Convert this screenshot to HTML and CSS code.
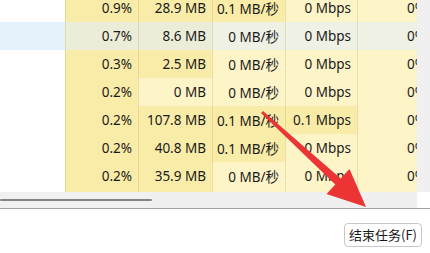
FILE: index.html
```html
<!DOCTYPE html>
<html lang="zh-CN">
<head>
    <meta charset="UTF-8">
    <title>任务管理器</title>
    <link rel="stylesheet" href="styles.css">
</head>
<body>
    <div class="window">
        <div class="grid-area">
            <div class="table-view">
                <div class="rows">
                    <div class="row">
                        <div class="cell name"></div>
                        <div class="cell dark">0.9%</div>
                        <div class="cell dark">28.9 MB</div>
                        <div class="cell dark">0.1 MB/秒</div>
                        <div class="cell light">0 Mbps</div>
                        <div class="cell light">0%</div>
                    </div>
                    <div class="row hover">
                        <div class="cell name"></div>
                        <div class="cell dark">0.7%</div>
                        <div class="cell dark">8.6 MB</div>
                        <div class="cell light">0 MB/秒</div>
                        <div class="cell light">0 Mbps</div>
                        <div class="cell light">0%</div>
                    </div>
                    <div class="row">
                        <div class="cell name"></div>
                        <div class="cell dark">0.3%</div>
                        <div class="cell dark">2.5 MB</div>
                        <div class="cell light">0 MB/秒</div>
                        <div class="cell light">0 Mbps</div>
                        <div class="cell light">0%</div>
                    </div>
                    <div class="row">
                        <div class="cell name"></div>
                        <div class="cell dark">0.2%</div>
                        <div class="cell light">0 MB</div>
                        <div class="cell light">0 MB/秒</div>
                        <div class="cell light">0 Mbps</div>
                        <div class="cell light">0%</div>
                    </div>
                    <div class="row">
                        <div class="cell name"></div>
                        <div class="cell dark">0.2%</div>
                        <div class="cell dark">107.8 MB</div>
                        <div class="cell dark">0.1 MB/秒</div>
                        <div class="cell dark">0.1 Mbps</div>
                        <div class="cell light">0%</div>
                    </div>
                    <div class="row">
                        <div class="cell name"></div>
                        <div class="cell dark">0.2%</div>
                        <div class="cell dark">40.8 MB</div>
                        <div class="cell dark">0.1 MB/秒</div>
                        <div class="cell light">0 Mbps</div>
                        <div class="cell light">0%</div>
                    </div>
                    <div class="row">
                        <div class="cell name"></div>
                        <div class="cell dark">0.2%</div>
                        <div class="cell dark">35.9 MB</div>
                        <div class="cell light">0 MB/秒</div>
                        <div class="cell light">0 Mbps</div>
                        <div class="cell light">0%</div>
                    </div>
                    <div class="row">
                        <div class="cell name"></div>
                        <div class="cell dark">0.1%</div>
                        <div class="cell dark">12.4 MB</div>
                        <div class="cell light">0 MB/秒</div>
                        <div class="cell light">0 Mbps</div>
                        <div class="cell light">0%</div>
                    </div>
                </div>
            </div>
            <div class="vscroll"></div>
        </div>
        <div class="hscroll">
            <div class="track">
                <div class="thumb"></div>
            </div>
            <div class="corner"></div>
        </div>
        <div class="footer">
            <button class="end-task">结束任务(F)</button>
        </div>
    </div>

    <svg class="arrow" width="430" height="253" viewBox="0 0 430 253">
        <polygon points="261,113.1 335.3,184.4 326.5,193.9 366,207 349.5,168.9 340.7,178.4 263,110.9" fill="#ec3434"/>
    </svg>
</body>
</html>
```

FILE: styles.css
```css
body {
    margin: 0;
    width: 430px;
    height: 253px;
    overflow: hidden;
    background: #ffffff;
    font-family: "Noto Sans", "Noto Sans CJK SC", sans-serif;
    font-size: 13.5px;
    color: #1a1a1a;
    position: relative;
}

.window {
    display: flex;
    flex-direction: column;
    height: 253px;
}

.grid-area {
    display: flex;
    height: 192px;
}

.table-view {
    width: 417px;
    height: 192px;
    overflow: hidden;
}

.rows {
    margin-top: -6px;
    width: 432px;
}

.row {
    display: grid;
    grid-template-columns: 65px 73px 74px 73px 72px 75px;
    height: 28px;
}

.cell {
    display: flex;
    align-items: center;
    justify-content: flex-end;
    padding-right: 6px;
    white-space: nowrap;
    border-left: 1px solid rgba(170, 145, 60, 0.22);
}

.cell.name {
    border-left: none;
    background: #ffffff;
}

.cell.dark {
    background: #f9eca8;
}

.cell.light {
    background: #fdf4c8;
}

.row.hover .cell.name {
    background: #e5f1fb;
}

.row.hover .cell.dark {
    background: #ebedd8;
}

.row.hover .cell.light {
    background: #eff1e5;
}

.vscroll {
    width: 13px;
    background: #f0f0f0;
}

.hscroll {
    display: flex;
    height: 16px;
    border-bottom: 1px solid #a3a3a3;
}

.track {
    width: 417px;
    background: #f0f0f0;
    display: flex;
    align-items: center;
}

.thumb {
    width: 152px;
    height: 2px;
    border-radius: 1px;
    background: #858585;
}

.corner {
    flex: 1;
    background: #ffffff;
}

.footer {
    display: flex;
    justify-content: flex-end;
    padding: 14px 8px 0 0;
}

.end-task {
    font-family: "Noto Sans CJK SC", sans-serif;
    font-size: 13px;
    color: #1a1a1a;
    background: #ffffff;
    border: 1px solid #c8c8c8;
    border-radius: 4px;
    height: 24px;
    padding: 0 4px;
    line-height: 20px;
}

.arrow {
    position: absolute;
    left: 0;
    top: 0;
    pointer-events: none;
}
```
